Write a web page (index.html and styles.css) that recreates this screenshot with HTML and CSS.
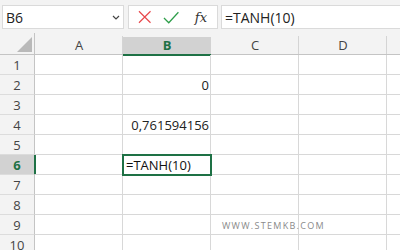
FILE: index.html
```html
<!DOCTYPE html>
<html lang="en">
<head>
  <meta charset="UTF-8" />
  <meta name="viewport" content="width=device-width, initial-scale=1.0" />
  <title>TANH</title>
  <link rel="stylesheet" href="styles.css">
</head>
<body>
  <div class="toolbar">
    <div class="namebox">
      <span>B6</span>
      <svg class="chevron" width="8" height="5" viewBox="0 0 8 5"><path d="M1 1 L4 4 L7 1" fill="none" stroke="#444" stroke-width="1.2"/></svg>
    </div>
    <div class="actions">
      <svg width="14" height="14" viewBox="0 0 14 14"><path d="M1 1 L13 13 M13 1 L1 13" stroke="#e8484c" stroke-width="1.2"/></svg>
      <svg width="17" height="13" viewBox="0 0 17 13"><path d="M1 7 L6 12 L16 1" fill="none" stroke="#2e9e4a" stroke-width="1.3"/></svg>
      <span class="fx">fx</span>
    </div>
    <div class="formula">=TANH(10)</div>
  </div>

  <div class="sheet">
    <div class="corner"><span class="tri"></span></div>
    <div class="colhead">A</div>
    <div class="colhead active">B</div>
    <div class="colhead">C</div>
    <div class="colhead">D</div>
    <div class="colhead last"></div>

    <div class="rowhead">1</div><div class="cell"></div><div class="cell"></div><div class="cell"></div><div class="cell"></div><div class="cell last"></div>
    <div class="rowhead">2</div><div class="cell"></div><div class="cell num">0</div><div class="cell"></div><div class="cell"></div><div class="cell last"></div>
    <div class="rowhead">3</div><div class="cell"></div><div class="cell"></div><div class="cell"></div><div class="cell"></div><div class="cell last"></div>
    <div class="rowhead">4</div><div class="cell"></div><div class="cell num">0,761594156</div><div class="cell"></div><div class="cell"></div><div class="cell last"></div>
    <div class="rowhead">5</div><div class="cell"></div><div class="cell"></div><div class="cell"></div><div class="cell"></div><div class="cell last"></div>
    <div class="rowhead active">6</div><div class="cell"></div><div class="cell selected">=TANH(10)</div><div class="cell"></div><div class="cell"></div><div class="cell last"></div>
    <div class="rowhead">7</div><div class="cell"></div><div class="cell"></div><div class="cell"></div><div class="cell"></div><div class="cell last"></div>
    <div class="rowhead">8</div><div class="cell"></div><div class="cell"></div><div class="cell"></div><div class="cell"></div><div class="cell last"></div>
    <div class="rowhead">9</div><div class="cell"></div><div class="cell"></div><div class="cell mark">WWW.STEMKB.COM</div><div class="cell"></div><div class="cell last"></div>
    <div class="rowhead">10</div><div class="cell"></div><div class="cell"></div><div class="cell"></div><div class="cell"></div><div class="cell last"></div>
  </div>
</body>
</html>
```

FILE: styles.css
```css
html, body {
  margin: 0;
  padding: 0;
  height: 100%;
  overflow: hidden;
}

body {
  background: #f3f3f3;
  font-family: "Open Sans", "Noto Sans", sans-serif;
  color: #222;
}

.toolbar {
  display: flex;
  height: 33px;
  padding: 5px 0 0 2px;
  box-sizing: border-box;
}

.namebox,
.actions,
.formula {
  height: 24px;
  box-sizing: border-box;
  background: #fff;
  border: 1px solid #dadada;
  display: flex;
  align-items: center;
}

.namebox {
  width: 122px;
  padding: 0 3px 0 3px;
  justify-content: space-between;
  font-size: 14px;
}

.actions {
  width: 90px;
  margin-left: 4px;
  padding: 0 10px 0 9px;
  gap: 12px;
}

.fx {
  font-family: "DejaVu Serif", "Liberation Serif", serif;
  font-style: italic;
  font-size: 13px;
  color: #333;
  margin-left: 3px;
}

.formula {
  flex: 1;
  margin-left: 3px;
  padding-left: 3px;
  border-right: none;
  font-size: 14px;
}

.sheet {
  display: grid;
  grid-template-columns: 35px repeat(4, 88px) 1fr;
  grid-template-rows: 22px;
  grid-auto-rows: 20px;
  background: #fff;
}

.corner,
.colhead {
  background: #f3f3f3;
  border-bottom: 1px solid #c4c4c4;
}

.corner {
  border-right: 1px solid #c4c4c4;
  position: relative;
}

.tri {
  position: absolute;
  right: 2px;
  bottom: 2px;
  width: 0;
  height: 0;
  border-left: 15px solid transparent;
  border-bottom: 15px solid #b9b9b9;
}

.colhead {
  display: flex;
  align-items: flex-end;
  justify-content: center;
  font-size: 13px;
  color: #444;
  line-height: 18px;
  background-image: linear-gradient(#d4d4d4, #d4d4d4);
  background-size: 1px 18px;
  background-position: right bottom;
  background-repeat: no-repeat;
}

.colhead.active {
  background-color: #d2d2d2;
  background-image: linear-gradient(#f3f3f3, #f3f3f3);
  background-size: 100% 4px;
  background-position: top;
  border-bottom: 2px solid #1e7145;
  margin-bottom: -1px;
  color: #1e7145;
  font-weight: bold;
  line-height: 17px;
}

.colhead.last {
  background-image: none;
}

.rowhead {
  background: #f3f3f3;
  border-right: 1px solid #c4c4c4;
  border-bottom: 1px solid #dcdcdc;
  font-size: 13px;
  color: #444;
  text-align: center;
  line-height: 19px;
  padding-top: 1px;
  box-sizing: border-box;
}

.rowhead.active {
  background: #d2d2d2;
  color: #1e7145;
  font-weight: bold;
  border-right: 2px solid #1e7145;
  margin-right: -1px;
}

.cell {
  border-right: 1px solid #d8d8d8;
  border-bottom: 1px solid #d8d8d8;
  font-size: 13px;
  line-height: 19px;
  padding: 1px 1px 0 3px;
  box-sizing: border-box;
  white-space: nowrap;
}

.cell.last {
  border-right: none;
}

.cell.num {
  text-align: right;
}

.cell.selected {
  outline: 2px solid #1e7145;
  outline-offset: -1px;
  position: relative;
  color: #111;
}

.cell.mark {
  font-size: 9px;
  letter-spacing: 1.3px;
  color: #8a8a8a;
  padding-left: 11px;
  overflow: visible;
}
```
